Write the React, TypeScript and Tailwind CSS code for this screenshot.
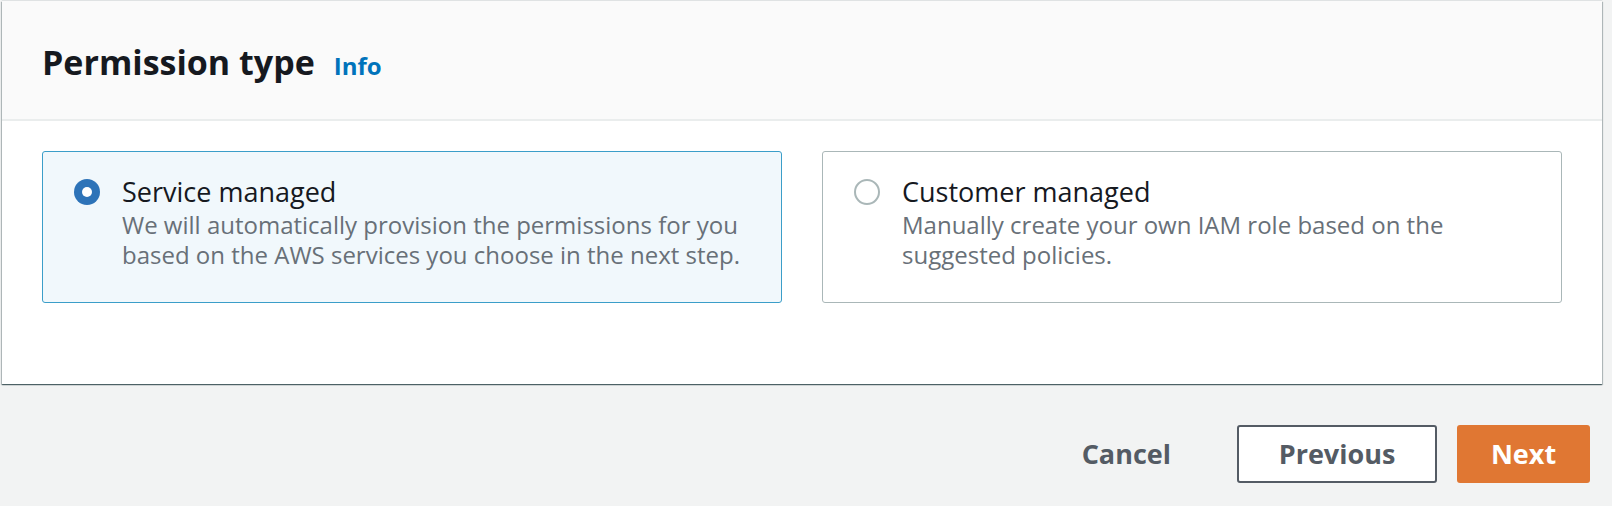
import React from "react";

function Radio({ checked }: { checked: boolean }) {
  return checked ? (
    <span className="mt-[5px] flex h-[26px] w-[26px] shrink-0 items-center justify-center rounded-full bg-[#2d73b8]">
      <span className="h-[10px] w-[10px] rounded-full bg-white" />
    </span>
  ) : (
    <span className="mt-[5px] h-[26px] w-[26px] shrink-0 rounded-full border-2 border-[#aab7b8] bg-white" />
  );
}

function Tile({
  checked,
  title,
  desc,
}: {
  checked: boolean;
  title: string;
  desc: string;
}) {
  return (
    <div
      className={
        checked
          ? "flex h-[152px] gap-[22px] rounded-[3px] border border-[#3b9ec9] bg-[#f1f8fc] pl-[31px] pr-[20px] pt-[22px]"
          : "flex h-[152px] gap-[22px] rounded-[3px] border border-[#aab7b8] bg-white pl-[31px] pr-[20px] pt-[22px]"
      }
    >
      <Radio checked={checked} />
      <div className="flex flex-col">
        <div className="text-[27px] leading-[36px] text-[#16191f]">{title}</div>
        <div className="text-[24px] leading-[30px] text-[#687078]">{desc}</div>
      </div>
    </div>
  );
}

export default function App() {
  return (
    <div className="h-[506px] w-[1612px] bg-[#f2f3f3] pl-[2px] pt-[1px] font-['Open_Sans',sans-serif]">
      <div className="w-[1600px] bg-white shadow-[0_1px_1px_0_rgba(0,28,36,0.5),1px_1px_1px_0_rgba(0,28,36,0.2),-1px_1px_1px_0_rgba(0,28,36,0.2),0_-1px_1px_0_rgba(0,28,36,0.08)]">
        <div className="flex h-[120px] items-center border-b-2 border-[#eaeded] bg-[#fafafa] px-10 pt-[3px]">
          <div className="flex items-baseline gap-[19px]">
            <h2 className="text-[34px] font-bold leading-[40px] text-[#16191f]">Permission type</h2>
            <a className="text-[24px] font-bold leading-[30px] text-[#0073bb]">Info</a>
          </div>
        </div>
        <div className="grid grid-cols-2 gap-10 px-10 pb-[81px] pt-[30px]">
          <Tile
            checked
            title="Service managed"
            desc="We will automatically provision the permissions for you based on the AWS services you choose in the next step."
          />
          <Tile
            checked={false}
            title="Customer managed"
            desc="Manually create your own IAM role based on the suggested policies."
          />
        </div>
      </div>
      <div className="mt-[41px] flex items-center justify-end gap-5 pr-[22px]">
        <button className="h-[58px] pl-[42px] pr-[46px] text-[27px] font-bold text-[#545b64]">Cancel</button>
        <button className="h-[58px] w-[200px] rounded-[3px] border-2 border-[#545b64] bg-white text-[27px] font-bold text-[#545b64]">
          Previous
        </button>
        <button className="h-[58px] w-[133px] rounded-[3px] bg-[#e07733] text-[27px] font-bold text-white">
          Next
        </button>
      </div>
    </div>
  );
}
